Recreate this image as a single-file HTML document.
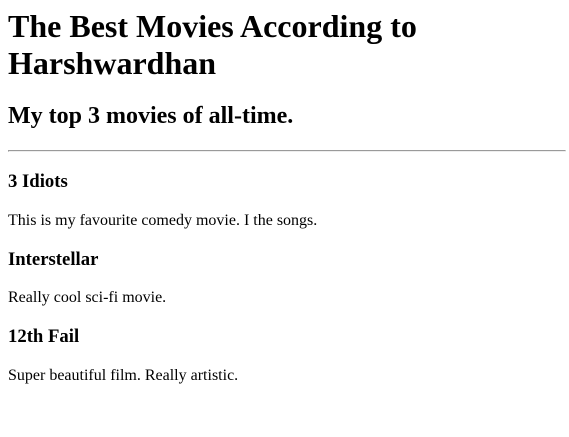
<!DOCTYPE html>
<html><head><meta charset="utf-8"><style>
body{margin:8px;font-family:"Liberation Serif",serif;color:#000;background:#fff}
h1{margin-top:0;font-size:32px}
hr{margin-right:-5px}
</style></head><body>
<h1>The Best Movies According to Harshwardhan</h1>
<h2>My top 3 movies of all-time.</h2>
<hr>
<h3>3 Idiots</h3>
<p>This is my favourite comedy movie. I the songs.</p>
<h3>Interstellar</h3>
<p>Really cool sci-fi movie.</p>
<h3>12th Fail</h3>
<p>Super beautiful film. Really artistic.</p>
</body></html>
